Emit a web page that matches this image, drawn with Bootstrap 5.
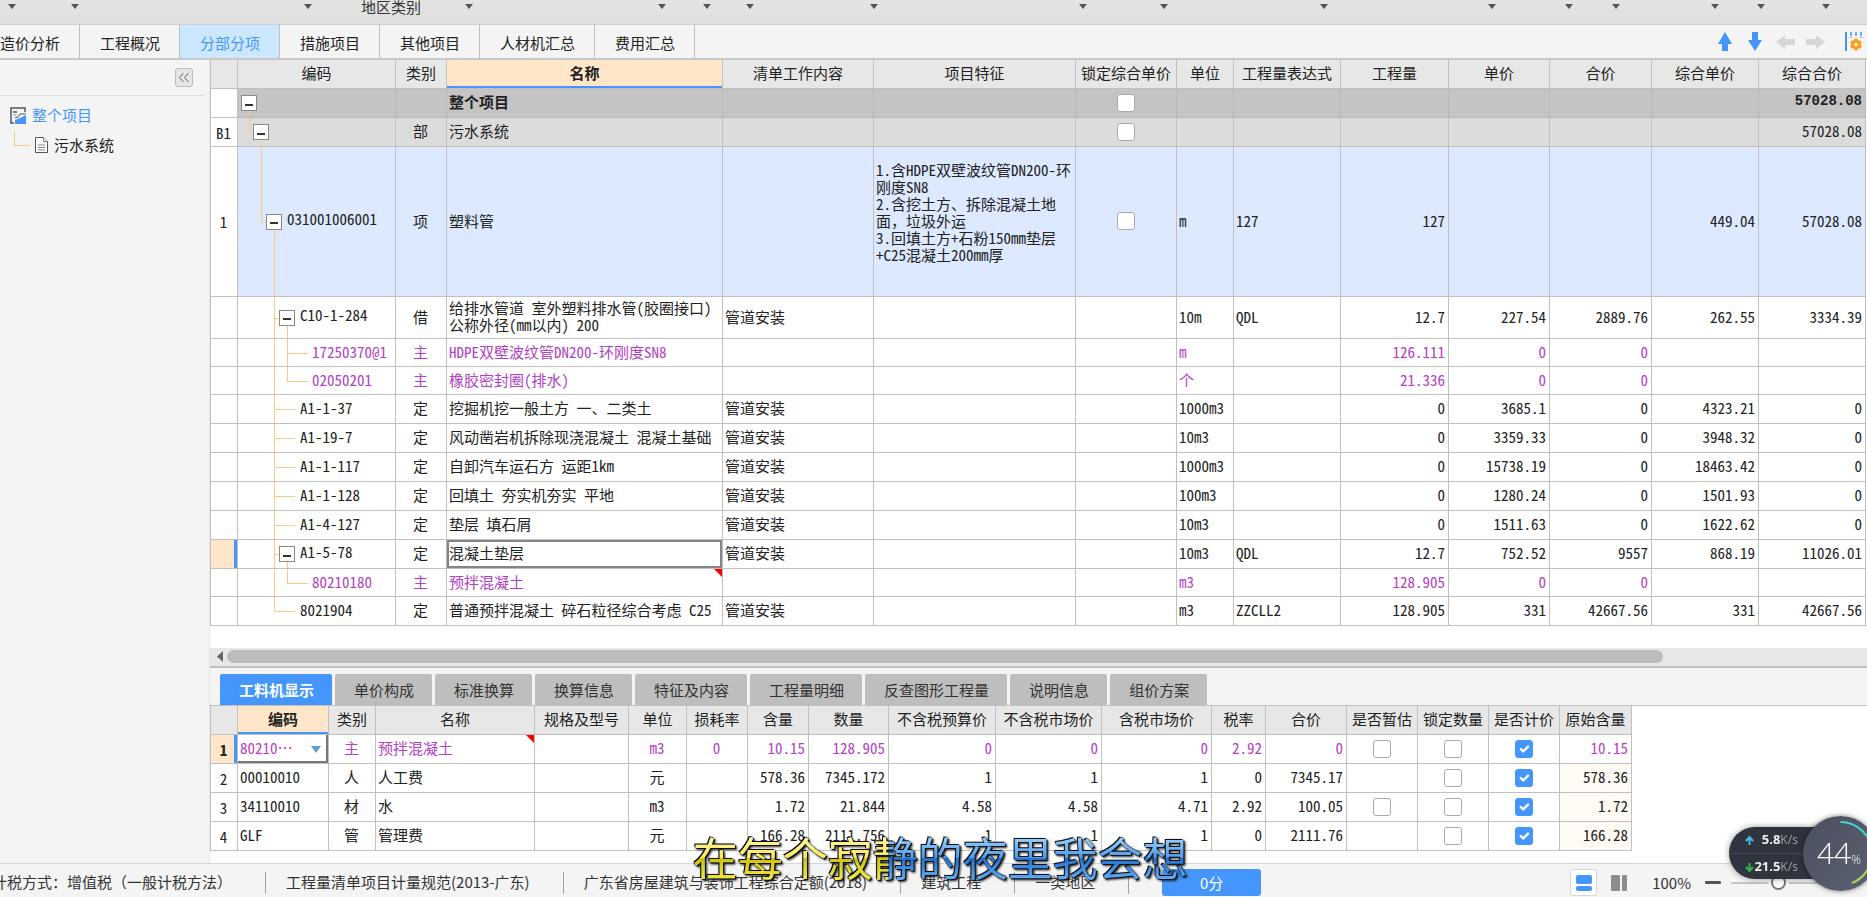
<!DOCTYPE html>
<html lang="zh-CN">
<head>
<meta charset="utf-8">
<meta name="viewport" content="width=device-width, initial-scale=1">
<title>分部分项</title>
<link href="https://cdn.jsdelivr.net/npm/bootstrap@5.3.0/dist/css/bootstrap.min.css" rel="stylesheet">
<style>
:root{--line:#c0c0c0;--accent:#4496fd;--panel:#f4f4f4;--peach:#ffe6c8;--guide:#fdca86}
body{font:15px/20px "Noto Sans CJK SC",sans-serif;color:#333;background:var(--panel)}
button{font:inherit;color:inherit}
.ribbon{height:25px;flex:none;display:grid;grid-template-columns:18fr 63fr 233fr 161fr 193fr 45fr 43fr 124fr 209fr 81fr 160fr 168fr 77fr 47fr 99fr 46fr 65fr 35fr;background:linear-gradient(#e4e4e4,#dedede);border-bottom:1px solid #cfcfcf}
.ribbon button{border:0;background:none;padding:0 2px 0 0;height:14px;line-height:14px;display:flex;align-items:center;justify-content:flex-end;white-space:nowrap}
.ribbon button span{margin-right:44px}
.ribbon button::after,.caret{content:"";border:4px solid transparent;border-top:5px solid #555;border-bottom:0;margin-bottom:2px}
.pages{height:35px;flex:none;border-bottom:2px solid #c9c9c9}
.pages .pg{margin:0;border:0;border-right:1px solid var(--line);border-radius:0;padding:2px 19px 0 20px;height:33px;background:none;color:#222;white-space:nowrap}
.pages .pg:first-child{margin-left:-20px}
.pages .pg.active{background:#cce8ff;color:var(--accent)}
.tools{gap:10px}
.tool{border:0;background:none;padding:0;width:20px;height:20px;display:flex;align-items:center;justify-content:center}
.side{width:210px;flex:none;border-right:1px solid #e6e6e6}
.side hr{margin:0 5px 0 0;color:#999}
.fold{width:18px;height:19px;border:1px solid #bbb;border-radius:3px;background:#e6e6e6;padding:0}
.side a{text-decoration:none;color:#222}
.side a.top{color:var(--accent)}
.node{height:30px;padding-left:10px;gap:5px}
.node+.node{padding-left:14px;gap:5px}
.elbow{width:16px;height:15px;border-left:1px solid var(--guide);border-bottom:1px solid var(--guide);margin-bottom:14px}
.sheet{font-family:"Noto Sans Mono CJK SC","Noto Sans CJK SC",monospace;font-size:15px;line-height:17px;table-layout:fixed;border-collapse:separate;border-spacing:0;border-left:1px solid var(--line);white-space:nowrap;color:#222;margin:0;background:#fff;width:1px}
.sheet td,.sheet th{border-right:1px solid var(--line);border-bottom:1px solid var(--line);padding:0 3px 3px 2px;height:29px;overflow:hidden;position:relative;vertical-align:middle}
.sheet th{background:#e7e7e7;font-weight:400;text-align:center;padding:0 0 3px}
.sheet th.cur{background:var(--peach);font-weight:700;box-shadow:inset 0 -2px var(--accent)}
.sheet td:first-child,.sheet td:nth-child(3){text-align:center}
.sheet td:first-child{padding-bottom:0}
.bill td:nth-child(7){text-align:center}
.bill td:nth-child(n+10){text-align:right}
.bill .all td:not(:first-child){background:#c4c4c4;font-weight:700;border-color:#b9b9b9}
.bill .all td:last-child{font-family:"Liberation Mono",monospace;font-size:14px}
.bill .part td:not(:first-child){background:#dcdcdc}
.bill .item td{height:150px}
.bill .item td:not(:first-child){background:#dce9fe}
.bill .two td{height:42px}
.bill .main-mat td{height:28px}
.res td:nth-child(5),.res td:nth-child(6),.res td:nth-child(7){text-align:center}
.res td:nth-child(n+8){text-align:right}
.res td:nth-child(15),.res td:nth-child(16),.res td:nth-child(17){text-align:center}
.res tr:nth-child(n+2) td:last-child{background:#fffaf3}
.main-mat td{color:#b341c4}
.sheet td.here{background:var(--peach);color:#222;box-shadow:inset -3px 0 var(--accent);font-weight:700}
.sheet td.sel{box-shadow:inset 0 0 0 2px #858585}
.sheet td.pick{padding:0;box-shadow:inset -2px -2px #777}
.pick select{appearance:none;border:0;background:none;color:#b341c4;width:100%;padding:0 2px 3px;font:inherit;height:26px;display:block}
.pick .caret{position:absolute;right:7px;top:11px;border-width:7px 5px 0;border-top-color:#5a9fd0;pointer-events:none}
.note::after{content:"";position:absolute;top:0;right:0;border-left:8px solid transparent;border-top:8px solid #f00}
.sheet .form-check-input{width:18px;height:18px;margin:2px 0 0;border-color:#aaa;border-radius:3px;vertical-align:middle}
.sheet .form-check-input:checked{background-color:var(--accent);border-color:var(--accent)}
/* tree guides: one step is 13px */
.sheet .lv0{padding-left:3px}.sheet .lv1{padding-left:15px}.sheet .lv2{padding-left:28px}.sheet .lv3{padding-left:41px}.sheet .leaf3{padding-left:62px}.sheet .leaf4{padding-left:74px}
.twig{width:16px;height:16px;border:1px solid #888;background:#fff;padding:3px;display:inline-block;vertical-align:middle;margin:2px 5px 0 0;position:relative}
.twig::after{content:"";display:block;height:2px;background:#333;margin-top:3px}
.v,.h{position:absolute;background:var(--guide)}
.v{width:1px;top:0;bottom:0}.h{height:1px;top:50%}
.v.up{bottom:50%}.v.down{top:calc(50% + 8px)}
.g0{left:11px}.g1{left:23px}.g2{left:36px}.g3{left:49px}
.h.s{width:5px}.h.l{width:21px}
.track{height:18px;background:#e7e7e7;padding:2px 0 3px 7px}
.thumb{height:13px;border-radius:7px;background:#bdbdbd;width:87%}
.work{border-top:2px solid var(--line);padding:6px 0 0 10px;gap:3px}
.work button{border:0;border-radius:2px 2px 0 0;background:#bebebe;height:31px;padding:0 18px 0 19px;white-space:nowrap}
.work button.active{background:var(--accent);color:#fff;font-weight:700}
.lower{border-top:1px solid var(--line);height:158px}
.status{height:34px;flex:none;border-top:1px solid #d6d6d6;white-space:nowrap;color:#333;padding-top:4px}
.status .cellx{padding:0 33px 0 20px;border-right:1px solid #9aa4ae;height:22px}
.status .cellx:first-child{margin-left:-28px}
.score{width:99px;height:27px;border:0;border-radius:3px;background:var(--accent);color:#fff;margin-left:33px}
.view{width:27px;height:27px;border:0;background:none;padding:0;display:flex;align-items:center;justify-content:center}
.view.active{border:1px solid #d8d8d8;border-radius:3px;background:#fff}
.zoomer{width:104px;height:16px;appearance:none;background:linear-gradient(#c6c6c6,#c6c6c6) center/100% 2px no-repeat}
.zoomer::-webkit-slider-thumb{appearance:none;width:15px;height:15px;border:2px solid #777;border-radius:50%;background:#fff;box-shadow:0 0 0 3px var(--panel)}
.net{position:fixed;right:-11px;bottom:6px;width:149px;height:75px}
.pill{position:absolute;left:0;top:11px;width:110px;height:52px;border-radius:26px 0 0 26px;background:#30343f;box-shadow:0 0 6px #0006;color:#eee;font:700 13px/25px "Noto Sans",sans-serif}
.pill div{padding-right:41px;text-align:right;height:26px;white-space:nowrap}
.pill div+div{border-top:1px solid #454955}
.pill small{font-size:12px;font-weight:400;color:#999}
.ball{position:absolute;right:0;top:0;width:75px;height:75px;border-radius:50%;background:linear-gradient(135deg,#4a4f5e,#5c6273);box-shadow:0 0 5px #0008;color:#fff;font:300 30px/73px "Open Sans","Noto Sans",sans-serif;padding-left:14px}
.ball small{font-size:12px}
.ball svg{position:absolute;left:0;top:0}
.lyric{position:fixed;left:37.1%;bottom:16px;font:400 45px/48px "Noto Sans CJK SC",sans-serif;white-space:nowrap;filter:drop-shadow(1px 1px 0 #111) drop-shadow(-1px -1px 0 #111) drop-shadow(1px 1px 1px #222);pointer-events:none;margin:0}
.lyric span{color:transparent;-webkit-background-clip:text;background-clip:text;background-image:linear-gradient(#fff7a0 20%,#ffe650 52%,#d2c208 53%,#f8ef3c 90%),linear-gradient(#9ad2ff 20%,#4b9aec 52%,#2070cc 53%,#6bb6ff 90%);background-size:39.4% 100%,100% 100%;background-repeat:no-repeat}
</style>
</head>
<body class="vh-100 d-flex flex-column overflow-hidden">
<div class="ribbon" role="toolbar" aria-label="功能区">
<button aria-label="菜单1"></button><button aria-label="菜单2"></button><button aria-label="菜单3"></button><button><span>地区类别</span></button><button aria-label="菜单5"></button><button aria-label="菜单6"></button><button aria-label="菜单7"></button><button aria-label="菜单8"></button><button aria-label="菜单9"></button><button aria-label="菜单10"></button><button aria-label="菜单11"></button><button aria-label="菜单12"></button><button aria-label="菜单13"></button><button aria-label="菜单14"></button><button aria-label="菜单15"></button><button aria-label="菜单16"></button><button aria-label="菜单17"></button>
</div>
<nav class="pages d-flex">
<button class="pg">造价分析</button><button class="pg">工程概况</button><button class="pg active">分部分项</button><button class="pg">措施项目</button><button class="pg">其他项目</button><button class="pg">人材机汇总</button><button class="pg">费用汇总</button>
<div class="tools ms-auto d-flex align-items-center pe-1">
<button class="tool" aria-label="上移"><svg width="14" height="20"><path d="M7 0l7 12h-4v7H4v-7H0z" fill="#4496fd"/></svg></button>
<button class="tool" aria-label="下移"><svg width="14" height="20"><path d="M7 19l7-11h-4V0H4v8H0z" fill="#4496fd"/></svg></button>
<button class="tool" aria-label="左移"><svg width="19" height="14"><path d="M0 7l9-7v4h10v6H9v4z" fill="#d6d6d6"/></svg></button>
<button class="tool" aria-label="右移"><svg width="19" height="14"><path d="M19 7l-9-7v4H0v6h10v4z" fill="#d6d6d6"/></svg></button>
<button class="tool ms-2" aria-label="列设置"><svg width="18" height="20"><path d="M2 0v19" stroke="#4496fd" stroke-width="2"/><path d="M7 0v6M12 0v5M17 0v6" stroke="#4496fd" stroke-width="1.500" stroke-dasharray="4 1"/><circle cx="12" cy="12.500" r="3.500" fill="none" stroke="#ff9c1a" stroke-width="3"/><path d="M12 6.500v12M6.800 9.500l10.400 6M6.800 15.500l10.400-6" stroke="#ff9c1a" stroke-width="3"/><circle cx="12" cy="12.500" r="1.800" fill="#f4f4f4"/></svg></button>
</div>
</nav>
<div class="d-flex flex-grow-1 overflow-hidden">
<aside class="side">
<div class="d-flex justify-content-end pt-2 pb-2 pe-3"><button class="fold d-flex align-items-center justify-content-center" aria-label="收起"><svg width="12" height="11" fill="none" stroke="#666"><path d="M5.500 1L1.500 5.500l4 4.500M10.500 1l-4 4.500 4 4.500"/></svg></button></div>
<hr>
<div class="node d-flex align-items-center mt-1"><svg width="17" height="17" fill="none"><path d="M15 5V1H1v15h3M3 5h4" stroke="#555" stroke-width="1.500"/><path d="M3.500 8h3" stroke="#4496fd"/><path d="M5 17v-4l5-2 6-3v9z" fill="#4496fd"/><path d="M5 11l3-1 2-3h6" stroke="#555"/></svg><a class="top" href="#">整个项目</a></div>
<div class="node d-flex align-items-center"><span class="elbow"></span><svg width="14" height="16" fill="#fff" stroke="#555"><path d="M.5.5h8l4 4v11H.5z"/><path d="M8.500.5v4h4M3 8h7M3 10.500h7M3 13h7" stroke="#888"/></svg><a href="#">污水系统</a></div>
</aside>
<main class="flex-grow-1 d-flex flex-column overflow-hidden">
<div class="flex-grow-1 bg-white overflow-hidden">
<table class="sheet bill">
<colgroup><col style="width:27px"><col style="width:158px"><col style="width:51px"><col style="width:276px"><col style="width:151px"><col style="width:202px"><col style="width:101px"><col style="width:57px"><col style="width:107px"><col style="width:108px"><col style="width:101px"><col style="width:102px"><col style="width:107px"><col style="width:107px"></colgroup>
<thead><tr><th></th><th>编码</th><th>类别</th><th class="cur">名称</th><th>清单工作内容</th><th>项目特征</th><th>锁定综合单价</th><th>单位</th><th>工程量表达式</th><th>工程量</th><th>单价</th><th>合价</th><th>综合单价</th><th>综合合价</th></tr></thead>
<tbody>
<tr class="all"><td></td><td class="lv0"><button class="twig" aria-label="折叠"></button><i class="v down g0"></i></td><td></td><td>整个项目</td><td></td><td></td><td><input class="form-check-input" type="checkbox" aria-label="锁定综合单价"></td><td></td><td></td><td></td><td></td><td></td><td></td><td>57028.08</td></tr>
<tr class="part"><td>B1</td><td class="lv1"><i class="v up g0"></i><i class="h s g0"></i><button class="twig" aria-label="折叠"></button><i class="v down g1"></i></td><td>部</td><td>污水系统</td><td></td><td></td><td><input class="form-check-input" type="checkbox" aria-label="锁定综合单价"></td><td></td><td></td><td></td><td></td><td></td><td></td><td>57028.08</td></tr>
<tr class="item"><td>1</td><td class="lv2"><i class="v up g1"></i><i class="h s g1"></i><button class="twig" aria-label="折叠"></button>031001006001<i class="v down g2"></i></td><td>项</td><td>塑料管</td><td></td><td>1.含HDPE双壁波纹管DN200-环<br>刚度SN8<br>2.含挖土方、拆除混凝土地<br>面，垃圾外运<br>3.回填土方+石粉150mm垫层<br>+C25混凝土200mm厚<br>&nbsp;</td><td><input class="form-check-input" type="checkbox" aria-label="锁定综合单价"></td><td>m</td><td>127</td><td>127</td><td></td><td></td><td>449.04</td><td>57028.08</td></tr>
<tr class="two"><td></td><td class="lv3"><i class="v g2"></i><i class="h s g2"></i><button class="twig" aria-label="折叠"></button>C10-1-284<i class="v down g3"></i></td><td>借</td><td>给排水管道 室外塑料排水管(胶圈接口)<br>公称外径(mm以内) 200</td><td>管道安装</td><td></td><td></td><td>10m</td><td>QDL</td><td>12.7</td><td>227.54</td><td>2889.76</td><td>262.55</td><td>3334.39</td></tr>
<tr class="main-mat"><td></td><td class="leaf4"><i class="v g2"></i><i class="v g3"></i><i class="h l g3"></i>17250370@1</td><td>主</td><td>HDPE双壁波纹管DN200-环刚度SN8</td><td></td><td></td><td></td><td>m</td><td></td><td>126.111</td><td>0</td><td>0</td><td></td><td></td></tr>
<tr class="main-mat"><td></td><td class="leaf4"><i class="v g2"></i><i class="v up g3"></i><i class="h l g3"></i>02050201</td><td>主</td><td>橡胶密封圈(排水)</td><td></td><td></td><td></td><td>个</td><td></td><td>21.336</td><td>0</td><td>0</td><td></td><td></td></tr>
<tr><td></td><td class="leaf3"><i class="v g2"></i><i class="h l g2"></i>A1-1-37</td><td>定</td><td>挖掘机挖一般土方 一、二类土</td><td>管道安装</td><td></td><td></td><td>1000m3</td><td></td><td>0</td><td>3685.1</td><td>0</td><td>4323.21</td><td>0</td></tr>
<tr><td></td><td class="leaf3"><i class="v g2"></i><i class="h l g2"></i>A1-19-7</td><td>定</td><td>风动凿岩机拆除现浇混凝土 混凝土基础</td><td>管道安装</td><td></td><td></td><td>10m3</td><td></td><td>0</td><td>3359.33</td><td>0</td><td>3948.32</td><td>0</td></tr>
<tr><td></td><td class="leaf3"><i class="v g2"></i><i class="h l g2"></i>A1-1-117</td><td>定</td><td>自卸汽车运石方 运距1km</td><td>管道安装</td><td></td><td></td><td>1000m3</td><td></td><td>0</td><td>15738.19</td><td>0</td><td>18463.42</td><td>0</td></tr>
<tr><td></td><td class="leaf3"><i class="v g2"></i><i class="h l g2"></i>A1-1-128</td><td>定</td><td>回填土 夯实机夯实 平地</td><td>管道安装</td><td></td><td></td><td>100m3</td><td></td><td>0</td><td>1280.24</td><td>0</td><td>1501.93</td><td>0</td></tr>
<tr><td></td><td class="leaf3"><i class="v g2"></i><i class="h l g2"></i>A1-4-127</td><td>定</td><td>垫层 填石屑</td><td>管道安装</td><td></td><td></td><td>10m3</td><td></td><td>0</td><td>1511.63</td><td>0</td><td>1622.62</td><td>0</td></tr>
<tr><td class="here"></td><td class="lv3"><i class="v g2"></i><i class="h s g2"></i><button class="twig" aria-label="折叠"></button>A1-5-78<i class="v down g3"></i></td><td>定</td><td class="sel">混凝土垫层</td><td>管道安装</td><td></td><td></td><td>10m3</td><td>QDL</td><td>12.7</td><td>752.52</td><td>9557</td><td>868.19</td><td>11026.01</td></tr>
<tr class="main-mat"><td></td><td class="leaf4"><i class="v g2"></i><i class="v up g3"></i><i class="h l g3"></i>80210180</td><td>主</td><td class="note">预拌混凝土</td><td></td><td></td><td></td><td>m3</td><td></td><td>128.905</td><td>0</td><td>0</td><td></td><td></td></tr>
<tr><td></td><td class="leaf3"><i class="v up g2"></i><i class="h l g2"></i>8021904</td><td>定</td><td>普通预拌混凝土 碎石粒径综合考虑 C25</td><td>管道安装</td><td></td><td></td><td>m3</td><td>ZZCLL2</td><td>128.905</td><td>331</td><td>42667.56</td><td>331</td><td>42667.56</td></tr>
</tbody>
</table>
</div>
<div class="track d-flex align-items-center"><svg class="me-1" width="6" height="11"><path d="M6 0v11L0 5.500z" fill="#666"/></svg><div class="thumb"></div></div>
<div class="work d-flex"><button class="active">工料机显示</button><button>单价构成</button><button>标准换算</button><button>换算信息</button><button>特征及内容</button><button>工程量明细</button><button>反查图形工程量</button><button>说明信息</button><button>组价方案</button></div>
<div class="lower bg-white overflow-hidden">
<table class="sheet res">
<colgroup><col style="width:27px"><col style="width:91px"><col style="width:47px"><col style="width:159px"><col style="width:94px"><col style="width:58px"><col style="width:61px"><col style="width:61px"><col style="width:80px"><col style="width:107px"><col style="width:106px"><col style="width:110px"><col style="width:54px"><col style="width:81px"><col style="width:71px"><col style="width:71px"><col style="width:71px"><col style="width:72px"></colgroup>
<thead><tr><th></th><th class="cur">编码</th><th>类别</th><th>名称</th><th>规格及型号</th><th>单位</th><th>损耗率</th><th>含量</th><th>数量</th><th>不含税预算价</th><th>不含税市场价</th><th>含税市场价</th><th>税率</th><th>合价</th><th>是否暂估</th><th>锁定数量</th><th>是否计价</th><th>原始含量</th></tr></thead>
<tbody>
<tr class="main-mat"><td class="here">1</td><td class="pick"><select aria-label="编码"><option>80210…</option></select><i class="caret"></i></td><td>主</td><td class="note">预拌混凝土</td><td></td><td>m3</td><td>0</td><td>10.15</td><td>128.905</td><td>0</td><td>0</td><td>0</td><td>2.92</td><td>0</td><td><input class="form-check-input" type="checkbox" aria-label="是否暂估"></td><td><input class="form-check-input" type="checkbox" aria-label="锁定数量"></td><td><input class="form-check-input" type="checkbox" checked aria-label="是否计价"></td><td>10.15</td></tr>
<tr><td>2</td><td>00010010</td><td>人</td><td>人工费</td><td></td><td>元</td><td></td><td>578.36</td><td>7345.172</td><td>1</td><td>1</td><td>1</td><td>0</td><td>7345.17</td><td></td><td><input class="form-check-input" type="checkbox" aria-label="锁定数量"></td><td><input class="form-check-input" type="checkbox" checked aria-label="是否计价"></td><td>578.36</td></tr>
<tr><td>3</td><td>34110010</td><td>材</td><td>水</td><td></td><td>m3</td><td></td><td>1.72</td><td>21.844</td><td>4.58</td><td>4.58</td><td>4.71</td><td>2.92</td><td>100.05</td><td><input class="form-check-input" type="checkbox" aria-label="是否暂估"></td><td><input class="form-check-input" type="checkbox" aria-label="锁定数量"></td><td><input class="form-check-input" type="checkbox" checked aria-label="是否计价"></td><td>1.72</td></tr>
<tr><td>4</td><td>GLF</td><td>管</td><td>管理费</td><td></td><td>元</td><td></td><td>166.28</td><td>2111.756</td><td>1</td><td>1</td><td>1</td><td>0</td><td>2111.76</td><td></td><td><input class="form-check-input" type="checkbox" aria-label="锁定数量"></td><td><input class="form-check-input" type="checkbox" checked aria-label="是否计价"></td><td>166.28</td></tr>
</tbody>
</table>
</div>
</main>
</div>
<footer class="status d-flex align-items-center">
<span class="cellx">计税方式：增值税（一般计税方法）</span><span class="cellx">工程量清单项目计量规范(2013-广东)</span><span class="cellx">广东省房屋建筑与装饰工程综合定额(2018)</span><span class="cellx">建筑工程</span><span class="cellx">一类地区</span><button class="score">0分</button>
<div class="ms-auto d-flex align-items-center pe-4 me-2">
<button class="view active" aria-label="上下布局"><svg width="16" height="16" fill="#4496fd"><rect width="16" height="9" rx="2"/><rect y="11" width="16" height="5" rx="2"/></svg></button>
<button class="view ms-2" aria-label="左右布局"><svg width="16" height="16" fill="#8c8c8c"><rect width="9" height="16" rx="1"/><rect x="11" width="5" height="16" rx="1"/></svg></button>
<span class="ms-3 me-2 ps-1 pe-1">100%</span>
<button class="tool me-2" aria-label="缩小"><svg width="16" height="3"><rect width="16" height="3" rx="1" fill="#555"/></svg></button>
<input class="zoomer" type="range" min="0" max="100" value="45" aria-label="缩放比例">
</div>
</footer>
<div class="net">
<div class="pill"><div><svg class="me-2" width="9" height="9" fill="none" stroke="#4fb4f2" stroke-width="2"><path d="M4.500 9V1M1 5l3.500-4L8 5"/></svg>5.8<small>K/s</small></div><div><svg width="9" height="9" fill="none" stroke="#31b546" stroke-width="2"><path d="M4.500 0v8M1 4l3.500 4L8 4"/></svg>21.5<small>K/s</small></div></div>
<div class="ball">44<small>%</small><svg width="75" height="75" fill="none" stroke-width="2"><path d="M37.500 6A31.500 31.500 0 0 1 69 37.500" stroke="#42d6d0"/><path d="M69 37.500A31.500 31.500 0 0 1 49 67" stroke="#a6d857"/></svg></div>
</div>
<p class="lyric"><span>在每个寂静的夜里我会想</span></p>
<script src="https://cdn.jsdelivr.net/npm/bootstrap@5.3.0/dist/js/bootstrap.bundle.min.js"></script>
</body>
</html>
